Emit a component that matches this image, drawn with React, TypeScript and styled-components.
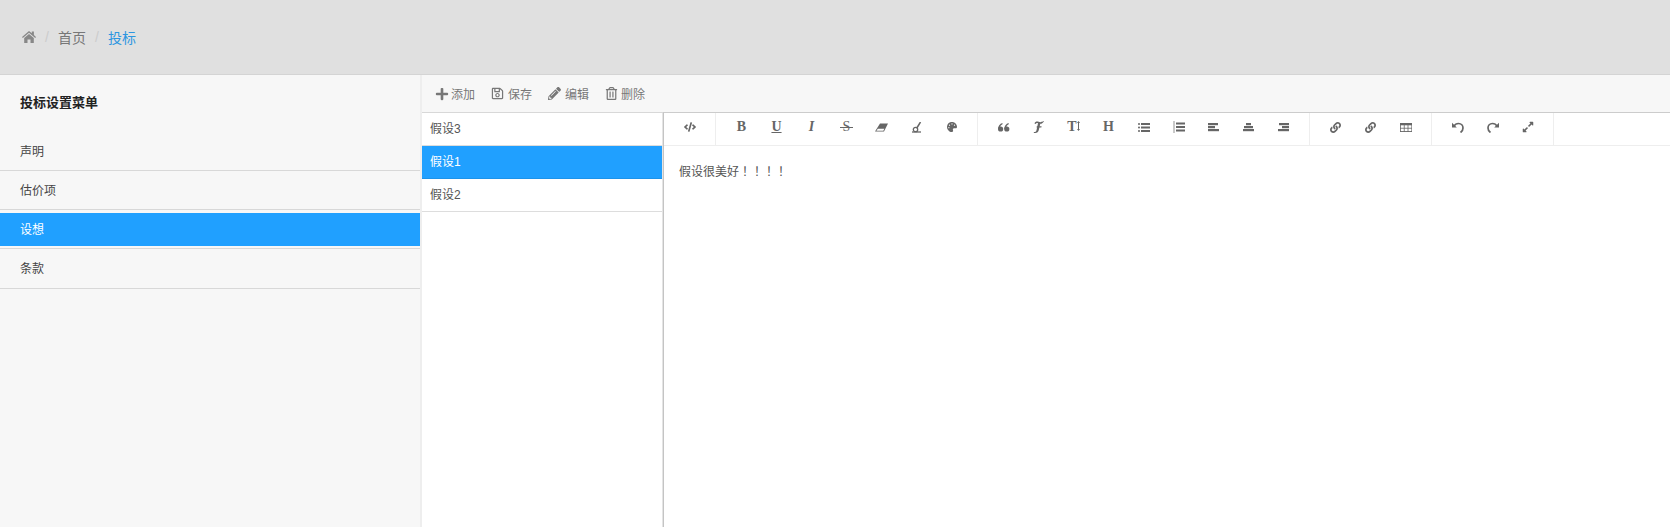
import React from 'react'
import styled, { createGlobalStyle } from 'styled-components'
import {
  FaPlus, FaRegSave, FaPencilAlt, FaRegTrashAlt, FaCode, FaPalette, FaLink, FaExpandAlt,
} from 'react-icons/fa'

const GlobalStyle = createGlobalStyle`
  html, body { margin: 0; height: 100%; background: #fff; }
  #root { height: 100%; }
  body { font-family: "Liberation Sans", "Noto Sans CJK SC", sans-serif; font-size: 12px; color: #555; }
`

const Page = styled.div`
  height: 527px;
  display: flex;
  flex-direction: column;
  overflow: hidden;
`

const Header = styled.div`
  height: 75px;
  flex: none;
  box-sizing: border-box;
  padding-left: 22px;
  display: flex;
  align-items: center;
  background: #e0e0e0;
  border-bottom: 1px solid #d4d4d4;
  font-size: 14px;
  color: #777;
`

const Sep = styled.span`
  color: #ccc;
  width: 22px;
  text-align: center;
`

const Current = styled.span`
  color: #2d96e0;
`

const Body = styled.div`
  flex: 1;
  display: flex;
  min-height: 0;
`

const Sidebar = styled.div`
  width: 422px;
  flex: none;
  box-sizing: border-box;
  background: #f7f7f7;
  border-right: 2px solid #eee;
`

const SideTitle = styled.div`
  box-sizing: border-box;
  height: 57px;
  padding: 19px 0 0 20px;
  font-size: 13px;
  font-weight: bold;
  line-height: 18px;
  color: #222;
`

const SideItem = styled.div`
  box-sizing: border-box;
  height: 39px;
  padding: 3px 0 2px;
  border-bottom: 1px solid #d8d8d8;

  &:last-child {
    height: 40px;
  }
`

const SideLink = styled.div<{ $active?: boolean }>`
  height: 33px;
  line-height: 35px;
  padding-left: 20px;
  color: ${(p) => (p.$active ? '#fff' : '#444')};
  background: ${(p) => (p.$active ? '#20a0ff' : 'transparent')};
`

const Main = styled.div`
  flex: 1;
  display: flex;
  flex-direction: column;
  min-width: 0;
`

const Actions = styled.div`
  height: 38px;
  flex: none;
  box-sizing: border-box;
  display: flex;
  align-items: center;
  padding-left: 13px;
  gap: 16px;
  background: #f7f7f7;
  border-bottom: 1px solid #d8d8d8;
  color: #777;
`

const Action = styled.span<{ $gap: number }>`
  display: flex;
  align-items: center;
  gap: ${(p) => p.$gap}px;
`

const Split = styled.div`
  flex: 1;
  display: flex;
  min-height: 0;
`

const List = styled.div`
  width: 241px;
  flex: none;
  box-sizing: border-box;
  border-right: 1px solid #e4e4e4;
`

const ListItem = styled.div<{ $active?: boolean }>`
  box-sizing: border-box;
  height: 33px;
  line-height: 32px;
  padding-left: 8px;
  color: ${(p) => (p.$active ? '#fff' : '#555')};
  background: ${(p) => (p.$active ? '#20a0ff' : '#fff')};
  border-bottom: 1px solid ${(p) => (p.$active ? '#1c93ea' : '#ddd')};
`

const Editor = styled.div`
  flex: 1;
  min-width: 0;
  border-left: 1px solid #c4c4c4;
  border-top: 1px solid #ccc;
  margin-top: -1px;
  display: flex;
  flex-direction: column;
`

const Toolbar = styled.div`
  height: 33px;
  flex: none;
  display: flex;
  box-sizing: border-box;
  border-bottom: 1px solid #eee;
`

const ToolGroup = styled.div`
  display: flex;
  align-items: center;
  padding: 0 8px 4px;
  border-right: 1px solid #eee;
`

const Tool = styled.span`
  width: 35px;
  height: 16px;
  display: flex;
  align-items: center;
  justify-content: center;
  color: #666;
  font-size: 12px;
`

const Glyph = styled.span<{ $italic?: boolean; $line?: string }>`
  font-family: "Liberation Serif", serif;
  font-size: 14px;
  line-height: 16px;
  font-weight: bold;
  font-style: ${(p) => (p.$italic ? 'italic' : 'normal')};
  text-decoration: ${(p) => p.$line || 'none'};
  color: #666;
`

const StruckGlyph = styled(Glyph)`
  position: relative;
  font-weight: normal;

  &::after {
    content: "";
    position: absolute;
    left: -3px;
    right: -3px;
    top: 8px;
    height: 1px;
    background: #666;
  }
`

const Content = styled.div`
  padding: 16px 15px;
  line-height: 18px;
  color: #555;
`

const Bangs = styled.span`
  font-family: "Noto Sans CJK TC", sans-serif;
`

const Draw: React.FC<{ w?: number; h?: number; children: React.ReactNode }> = ({ w = 14, h = 12, children }) => (
  <svg width={w} height={h} viewBox={`0 0 ${w} ${h}`} fill="#666">{children}</svg>
)

const Bars: React.FC<{ rows: [number, number][] }> = ({ rows }) => (
  <Draw w={11} h={9}>
    {rows.map(([x, w], i) => <rect key={i} x={x} y={i * 3} width={w} height={2.200} />)}
  </Draw>
)

const HomeIcon = () => (
  <svg width="14" height="12" viewBox="0 0 14 12" fill="#888">
    <path d="M7 0 9.800 2.300V.6h2.100v3.500L14 6l-.8.9L7 1.800.8 6.900 0 6z" />
    <path d="M7 3 11.800 7v5H8.500V8.500h-3V12H2.200V7z" />
  </svg>
)

const EraserIcon = () => (
  <Draw w={13} h={9}>
    <path d="M5 .5h8L9 8.500H0z" />
    <path d="M2.800 5.800 1.400 7.700h6.900l1.100-1.900z" fill="#fff" />
  </Draw>
)

const BrushIcon = () => (
  <Draw w={10} h={11}>
    <path d="M8.500 0 4.800 6" stroke="#666" strokeWidth="1.500" fill="none" />
    <circle cx="3.500" cy="7.500" r="2.200" fill="none" stroke="#666" strokeWidth="1.300" />
    <path d="M0 10h9" stroke="#666" strokeWidth="1.300" />
  </Draw>
)

const QuoteIcon = () => (
  <Draw w={12} h={9}>
    <circle cx="2.600" cy="6" r="2.600" />
    <circle cx="8.800" cy="6" r="2.600" />
    <path d="M0 6C0 3 1.800.8 4.500 0v1.300C2.800 2 2 3.500 2.200 5zM6.200 6c0-3 1.800-5.200 4.500-6v1.300C9 2 8.200 3.500 8.400 5z" />
  </Draw>
)

const ScriptFIcon = () => (
  <Draw w={11} h={12}>
    <path d="M1.500 2.500C2 .6 4 .3 5.600.8s3 .7 4.800-.8l.5.500C9.500 2.600 8.200 3 7.300 2.800L5.800 9c-.4 1.800-1.700 3-3.500 3H.7l.3-1h1C3 11 3.400 10 3.600 8.800L5 2.300C4 2 3.200 2 2.700 2.900z" />
    <path d="M3.800 5.200h4.800l-.3 1.400H3.500z" />
  </Draw>
)

const TextHeightIcon = () => (
  <span>
    <Glyph>T</Glyph>
    <Draw w={3} h={10}>
      <path d="M1.500 0 3 2H2v6h1L1.500 10 0 8h1V2H0z" />
    </Draw>
  </span>
)

const UlIcon = () => (
  <Draw w={12} h={9}>
    {[1, 4.500, 8].map((y) => (
      <g key={y}>
        <circle cx="1" cy={y} r="1" />
        <rect x="3" y={y - 1} width="9" height="2" />
      </g>
    ))}
  </Draw>
)

const OlIcon = () => (
  <Draw w={12} h={12}>
    <rect x="0.500" y="0" width="1" height="12" opacity="0.7" />
    {[2.500, 6, 9.500].map((y) => <rect key={y} x="3" y={y - 1} width="9" height="2" />)}
  </Draw>
)

const TableIcon = () => (
  <Draw w={12} h={9}>
    <path d="M0 0h12v9H0z" />
    {[0, 1, 2].map((c) => [0, 1].map((r) => (
      <rect key={`${c}${r}`} x={0.800 + c * 3.800} y={2.300 + r * 3.300} width="3" height="2.500" fill="#fff" />
    )))}
  </Draw>
)

const TurnIcon: React.FC<{ flip?: boolean }> = ({ flip }) => (
  <Draw w={12} h={11}>
    <g transform={flip ? 'translate(12 0) scale(-1 1)' : undefined}>
      <path d="M2 4C3 2.300 5 1.500 6.500 1.500 9.300 1.500 11 3.600 11 6 11 8 10 9.500 8.500 10.500" fill="none" stroke="#666" strokeWidth="1.700" />
      <path d="M0 .8V5.500H4.800z" />
    </g>
  </Draw>
)

const groups: React.ReactNode[][] = [
  [<FaCode size={12} />],
  [
    <Glyph>B</Glyph>,
    <Glyph $line="underline">U</Glyph>,
    <Glyph $italic>I</Glyph>,
    <StruckGlyph>S</StruckGlyph>,
    <EraserIcon />,
    <BrushIcon />,
    <FaPalette size={10} />,
  ],
  [
    <QuoteIcon />,
    <ScriptFIcon />,
    <TextHeightIcon />,
    <Glyph>H</Glyph>,
    <UlIcon />,
    <OlIcon />,
    <Bars rows={[[0, 10], [0, 7], [0, 11]]} />,
    <Bars rows={[[3, 5], [1, 9], [0, 11]]} />,
    <Bars rows={[[1, 10], [4, 7], [0, 11]]} />,
  ],
  [<FaLink size={11} />, <FaLink size={11} />, <TableIcon />],
  [<TurnIcon />, <TurnIcon flip />, <FaExpandAlt size={12} />],
]

const App: React.FC = () => (
  <Page>
    <GlobalStyle />
    <Header>
      <HomeIcon />
      <Sep>/</Sep>
      <span>首页</span>
      <Sep>/</Sep>
      <Current>投标</Current>
    </Header>
    <Body>
      <Sidebar>
        <SideTitle>投标设置菜单</SideTitle>
        <SideItem><SideLink>声明</SideLink></SideItem>
        <SideItem><SideLink>估价项</SideLink></SideItem>
        <SideItem><SideLink $active>设想</SideLink></SideItem>
        <SideItem><SideLink>条款</SideLink></SideItem>
      </Sidebar>
      <Main>
        <Actions>
          <Action $gap={2}><FaPlus size={14} />添加</Action>
          <Action $gap={4}><FaRegSave size={13} />保存</Action>
          <Action $gap={4}><FaPencilAlt size={13} />编辑</Action>
          <Action $gap={3}><FaRegTrashAlt size={13} />删除</Action>
        </Actions>
        <Split>
          <List>
            <ListItem>假设3</ListItem>
            <ListItem $active>假设1</ListItem>
            <ListItem>假设2</ListItem>
          </List>
          <Editor>
            <Toolbar>
              {groups.map((icons, i) => (
                <ToolGroup key={i}>
                  {icons.map((icon, j) => <Tool key={j}>{icon}</Tool>)}
                </ToolGroup>
              ))}
            </Toolbar>
            <Content>假设很美好<Bangs>！！！！</Bangs></Content>
          </Editor>
        </Split>
      </Main>
    </Body>
  </Page>
)

export default App
